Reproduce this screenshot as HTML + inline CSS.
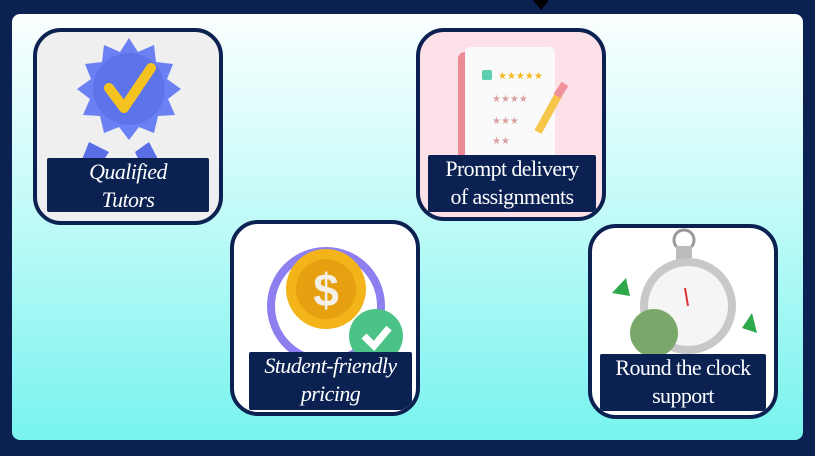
<!DOCTYPE html>
<html><head><style>
body{margin:0;width:815px;height:456px;background:#0b2152;position:relative;overflow:hidden;font-family:"Liberation Serif",serif}
.panel{position:absolute;left:12px;top:14px;width:791px;height:426px;border-radius:8px;background:linear-gradient(#fbffff 0%,#c4fbf8 45%,#78f3ee 100%)}
.card{position:absolute;border:4px solid #0b2152;border-radius:28px;overflow:hidden;box-sizing:border-box}
.lab{position:absolute;background:#0b2152;color:#fff;font-size:22px;letter-spacing:-0.6px;text-align:center;line-height:28px;border-radius:2px}
.it{font-style:italic}
</style></head><body>
<div style="position:absolute;left:533px;top:0;width:0;height:0;border-left:8px solid transparent;border-right:8px solid transparent;border-top:10px solid #000"></div>
<div class="panel"></div>

<div class="card" style="left:33px;top:28px;width:190px;height:197px;background:#efefef">
<svg width="190" height="197" style="position:absolute;left:0;top:0">
<path d="M52 110 L42 135 L62 135 L72 120 Z M112 110 L125 135 L105 135 L98 120 Z" fill="#5a6ee6"/>
<polygon points="92,6 101,20 117,13 119,30 136,32 130,47 144,57 131,67 138,83 121,84 117,101 102,95 92,108 82,95 67,101 63,84 46,83 53,67 40,57 54,47 48,32 65,30 67,13 83,20" fill="#6b80f2"/>
<circle cx="92" cy="57" r="36" fill="#5d73ea"/>
<path d="M72 56 L87 76 L114 36" stroke="#f5c320" stroke-width="10" fill="none" stroke-linecap="round" stroke-linejoin="round"/>
</svg>
<div class="lab it" style="left:10px;top:126px;width:162px;height:54px">Qualified<br>Tutors</div>
</div>

<div class="card" style="left:416px;top:28px;width:190px;height:193px;background:#fde1e8">
<svg width="190" height="193" style="position:absolute;left:0;top:0">
<rect x="38" y="20" width="14" height="130" rx="7" fill="#ec8a95"/>
<rect x="45" y="15" width="90" height="125" rx="6" fill="#fafafa"/>
<rect x="62" y="38" width="10" height="10" rx="2" fill="#5ccfb0"/>
<text x="78" y="47" font-size="10" fill="#f5b820">★★★★★</text>
<text x="72" y="70" font-size="10" fill="#d9a0a0">★★★★</text>
<text x="72" y="92" font-size="10" fill="#d9a0a0">★★★</text>
<text x="72" y="112" font-size="10" fill="#d9a0a0">★★</text>
<path d="M118 100 L140 60" stroke="#f5c64a" stroke-width="8"/>
<path d="M137 64 L145 52" stroke="#f0909a" stroke-width="8"/>
</svg>
<div class="lab" style="left:8px;top:123px;width:168px;height:57px">Prompt delivery<br>of assignments</div>
</div>

<div class="card" style="left:230px;top:220px;width:190px;height:196px;background:#fff">
<svg width="190" height="196" style="position:absolute;left:0;top:0">
<circle cx="92" cy="82" r="55" stroke="#8e7ff0" stroke-width="8" fill="none"/>
<circle cx="92" cy="65" r="40" fill="#f2b419"/>
<circle cx="92" cy="65" r="30" fill="#e6a010"/>
<text x="92" y="82" font-size="46" font-weight="bold" fill="#f4f0e8" text-anchor="middle" font-family="Liberation Sans">$</text>
<circle cx="142" cy="112" r="27" fill="#4cc386"/>
<path d="M130 112 L140 122 L155 104" stroke="#fff" stroke-width="7" fill="none"/>
</svg>
<div class="lab it" style="left:15px;top:128px;width:163px;height:58px">Student-friendly<br>pricing</div>
</div>

<div class="card" style="left:588px;top:224px;width:190px;height:195px;background:#fff">
<svg width="190" height="195" style="position:absolute;left:0;top:0">
<circle cx="92" cy="12" r="10" stroke="#999" stroke-width="3" fill="none"/>
<rect x="84" y="18" width="16" height="18" fill="#bbb"/>
<circle cx="96" cy="78" r="48" fill="#c8c8c8"/>
<circle cx="96" cy="78" r="40" fill="#f5f5f5"/>
<path d="M93 60 L96 78" stroke="#d33" stroke-width="2"/>
<circle cx="62" cy="105" r="24" fill="#7aa86a"/>
<path d="M20 65 L34 50 L38 68 Z M150 100 L160 85 L165 105 Z" fill="#2fa84a"/>
</svg>
<div class="lab" style="left:8px;top:126px;width:166px;height:57px">Round the clock<br>support</div>
</div>
</body></html>
